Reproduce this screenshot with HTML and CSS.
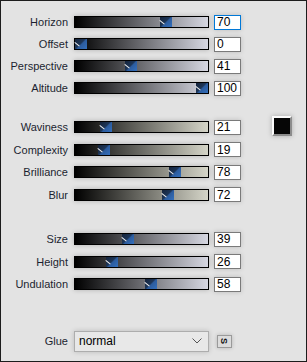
FILE: index.html
```html
<!DOCTYPE html>
<html lang="en">
<head>
    <meta charset="UTF-8">
    <meta name="viewport" content="width=device-width, initial-scale=1.0">
    <title>Wave settings</title>
    <link rel="stylesheet" href="styles.css">
</head>
<body>
    <div class="panel">
        <div class="group cool">
            <div class="row">
                <label>Horizon</label>
                <div class="slider"><div class="thumb" style="left: calc((100% - 12px) * 0.70)"></div></div>
                <input type="text" class="value focused" value="70">
            </div>
            <div class="row">
                <label>Offset</label>
                <div class="slider"><div class="thumb" style="left: calc((100% - 12px) * 0)"></div></div>
                <input type="text" class="value" value="0">
            </div>
            <div class="row">
                <label>Perspective</label>
                <div class="slider"><div class="thumb" style="left: calc((100% - 12px) * 0.41)"></div></div>
                <input type="text" class="value" value="41">
            </div>
            <div class="row">
                <label>Altitude</label>
                <div class="slider"><div class="thumb" style="left: calc((100% - 12px) * 1)"></div></div>
                <input type="text" class="value" value="100">
            </div>
        </div>

        <div class="group-wrap">
            <div class="group warm">
                <div class="row">
                    <label>Waviness</label>
                    <div class="slider"><div class="thumb" style="left: calc((100% - 12px) * 0.21)"></div></div>
                    <input type="text" class="value" value="21">
                </div>
                <div class="row">
                    <label>Complexity</label>
                    <div class="slider"><div class="thumb" style="left: calc((100% - 12px) * 0.19)"></div></div>
                    <input type="text" class="value" value="19">
                </div>
                <div class="row">
                    <label>Brilliance</label>
                    <div class="slider"><div class="thumb" style="left: calc((100% - 12px) * 0.78)"></div></div>
                    <input type="text" class="value" value="78">
                </div>
                <div class="row">
                    <label>Blur</label>
                    <div class="slider"><div class="thumb" style="left: calc((100% - 12px) * 0.72)"></div></div>
                    <input type="text" class="value" value="72">
                </div>
            </div>
            <div class="swatch"></div>
        </div>

        <div class="group cool">
            <div class="row">
                <label>Size</label>
                <div class="slider"><div class="thumb" style="left: calc((100% - 12px) * 0.39)"></div></div>
                <input type="text" class="value" value="39">
            </div>
            <div class="row">
                <label>Height</label>
                <div class="slider"><div class="thumb" style="left: calc((100% - 12px) * 0.26)"></div></div>
                <input type="text" class="value" value="26">
            </div>
            <div class="row">
                <label>Undulation</label>
                <div class="slider"><div class="thumb" style="left: calc((100% - 12px) * 0.58)"></div></div>
                <input type="text" class="value" value="58">
            </div>
        </div>

        <div class="glue-row">
            <label>Glue</label>
            <div class="select-box">
                <span>normal</span>
                <svg width="10" height="6" viewBox="0 0 10 6"><path d="M0.5 0.5 L5 5 L9.5 0.5" fill="none" stroke="#555" stroke-width="1"/></svg>
            </div>
            <div class="s-button"><span>S</span></div>
        </div>
    </div>
</body>
</html>
```

FILE: styles.css
```css
body {
    margin: 0;
    font-family: "Liberation Sans", Arial, sans-serif;
    font-size: 11px;
    color: #1b1f30;
}
.panel {
    width: 307px;
    height: 362px;
    box-sizing: border-box;
    border: 1px solid #1c1c1c;
    background-color: #e3e3e3;
    padding-top: 10px;
    display: flex;
    flex-direction: column;
}
.group {
    display: flex;
    flex-direction: column;
}
.group-wrap {
    display: flex;
    margin-top: 17px;
}
.group-wrap + .group {
    margin-top: 22px;
}
.row {
    height: 22px;
    display: flex;
    align-items: center;
}
.group-wrap .row, .group-wrap + .group .row {
    height: 22.5px;
}
.row label, .glue-row label {
    width: 67px;
    text-align: right;
    margin-right: 6px;
    white-space: nowrap;
}
.slider {
    width: 135px;
    height: 12px;
    box-sizing: border-box;
    border: 1px solid #000;
    position: relative;
    box-shadow: 0 0 5px rgba(0, 0, 0, 0.22);
}
.cool .slider {
    background: linear-gradient(to right, #000, #d6d7e1);
}
.warm .slider {
    background: linear-gradient(to right, #000, #d5d5c8);
}
.thumb {
    position: absolute;
    top: 0;
    width: 12px;
    height: 10px;
    background: linear-gradient(135deg, #15233a 0, #1d3556 45%, #2c5c9e 55%, #3470bd 100%);
}
.thumb::before {
    content: '';
    position: absolute;
    top: 3px;
    left: 0;
    width: 6px;
    height: 1px;
    background-color: #f2f2f2;
    transform: rotate(38deg);
    transform-origin: 0 0;
}
.value {
    width: 27px;
    height: 15px;
    box-sizing: border-box;
    margin: 0 0 0 5px;
    padding: 0 0 0 2px;
    border: 1px solid #7a7a7a;
    background-color: #fff;
    font-family: "Liberation Sans", Arial, sans-serif;
    font-size: 12px;
    color: #000;
    outline: none;
    box-shadow: 0 0 5px rgba(0, 0, 0, 0.18);
}
.value.focused {
    border-color: #0078d7;
}
.swatch {
    width: 20px;
    height: 20px;
    box-sizing: border-box;
    margin-left: 31px;
    border: 2px solid;
    border-color: #fbfbfb #8c8c8c #8c8c8c #fbfbfb;
    background-color: #060606;
    box-shadow: 0 0 5px rgba(0, 0, 0, 0.25);
}
.glue-row {
    display: flex;
    align-items: center;
    margin-top: 35px;
}
.select-box {
    width: 135px;
    height: 21px;
    box-sizing: border-box;
    border: 1px solid #adadad;
    background-color: #e8e8e8;
    display: flex;
    align-items: center;
    justify-content: space-between;
    padding: 0 6px 0 4px;
    font-size: 12px;
    color: #000;
    box-shadow: 0 0 5px rgba(0, 0, 0, 0.18);
}
.s-button {
    width: 15px;
    height: 13px;
    box-sizing: border-box;
    margin-left: 8px;
    border: 1px solid #9a9a9a;
    background-color: #dcdcdc;
    display: flex;
    align-items: center;
    justify-content: center;
    font-size: 9px;
    font-weight: bold;
    color: #111;
    box-shadow: 0 0 4px rgba(0, 0, 0, 0.2);
}
.s-button span {
    display: block;
    transform: rotate(90deg);
}
```
